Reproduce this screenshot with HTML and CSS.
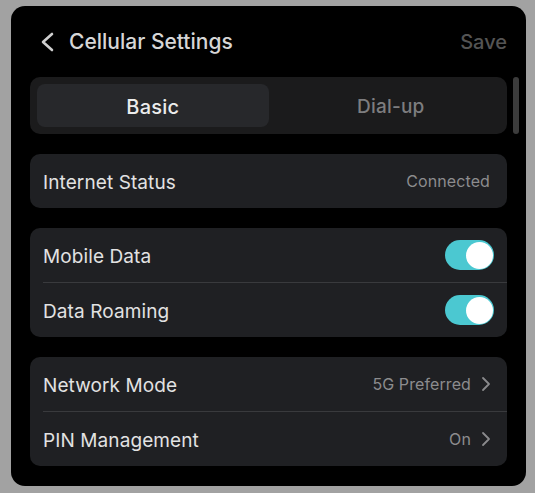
FILE: index.html
```html
<!DOCTYPE html>
<html lang="en">
<head>
  <meta charset="UTF-8">
  <title>Cellular Settings</title>
  <meta name="viewport" content="width=device-width, initial-scale=1.0">
  <link rel="stylesheet" href="styles.css">
</head>
<body>
  <div class="panel">
    <div class="header">
      <div class="header-left">
        <svg class="back" width="14" height="20" viewBox="0 0 14 20"><path d="M12 2 L3 10 L12 18" fill="none" stroke="#cfcfcf" stroke-width="2.6" stroke-linecap="round" stroke-linejoin="round"/></svg>
        <span class="title">Cellular Settings</span>
      </div>
      <span class="save">Save</span>
    </div>
    <div class="scrollbar"></div>
    <div class="tabs">
      <div class="tab active">Basic</div>
      <div class="tab second">Dial-up</div>
    </div>
    <div class="card">
      <div class="row"><span class="label">Internet Status</span><span class="value pad">Connected</span></div>
    </div>
    <div class="card">
      <div class="row"><span class="label">Mobile Data</span><span class="toggle"></span></div>
      <div class="row"><span class="label">Data Roaming</span><span class="toggle"></span></div>
    </div>
    <div class="card">
      <div class="row"><span class="label">Network Mode</span><span class="value">5G Preferred<svg class="chev" width="10" height="16" viewBox="0 0 10 16"><path d="M2 2 L8 8 L2 14" fill="none" stroke="#8a8a8c" stroke-width="1.8" stroke-linecap="round" stroke-linejoin="round"/></svg></span></div>
      <div class="row"><span class="label">PIN Management</span><span class="value">On<svg class="chev" width="10" height="16" viewBox="0 0 10 16"><path d="M2 2 L8 8 L2 14" fill="none" stroke="#8a8a8c" stroke-width="1.8" stroke-linecap="round" stroke-linejoin="round"/></svg></span></div>
    </div>
  </div>
</body>
</html>
```

FILE: styles.css
```css
* {
  box-sizing: border-box;
}
body {
  margin: 0;
  padding: 6px 9px 7px 11px;
  background-color: #a2a2a2;
  font-family: Inter, "Noto Sans", sans-serif;
}
.panel {
  position: relative;
  background-color: #000;
  border-radius: 14px;
  height: 480px;
  padding: 0 19px;
}
.header {
  height: 71px;
  display: flex;
  align-items: center;
  justify-content: space-between;
  padding: 0 0 0 10px;
}
.header-left {
  display: flex;
  align-items: center;
  gap: 15px;
}
.title {
  font-size: 21px;
  font-weight: 500;
  color: #d6d6d6;
}
.save {
  font-size: 20px;
  font-weight: 500;
  color: #545454;
}
.scrollbar {
  position: absolute;
  top: 71px;
  right: 7px;
  width: 6px;
  height: 57px;
  border-radius: 3px;
  background-color: #3c3c3c;
}
.tabs {
  display: grid;
  grid-template-columns: 1fr 1fr;
  height: 57px;
  padding: 7px;
  background-color: #1b1b1c;
  border-radius: 10px;
}
.tab {
  display: flex;
  align-items: center;
  justify-content: center;
  padding-top: 2px;
  border-radius: 8px;
  font-size: 19px;
  font-weight: 500;
  color: #7d7d7f;
  letter-spacing: 0.2px;
}
.tab.second {
  padding-left: 13px;
}
.tab.active {
  background-color: #27282b;
  color: #ececec;
  font-size: 20px;
}
.card {
  margin-top: 20px;
  background-color: #1f2023;
  border-radius: 10px;
}
.row {
  height: 54px;
  display: flex;
  align-items: center;
  justify-content: space-between;
  margin-left: 13px;
  padding-right: 13px;
}
.row + .row {
  border-top: 1px solid #393a3d;
  height: 55px;
}
.label {
  padding-top: 2px;
  font-size: 19px;
  color: #e2e2e2;
  letter-spacing: 0.1px;
}
.value {
  display: flex;
  align-items: center;
  gap: 10px;
  font-size: 16px;
  color: #8c8c8e;
  letter-spacing: 0.1px;
  padding-right: 3px;
}
.value.pad {
  padding-right: 4px;
}
.toggle {
  position: relative;
  width: 49px;
  height: 30px;
  border-radius: 15px;
  background-color: #4bc8d1;
}
.toggle::after {
  content: "";
  position: absolute;
  top: 1.5px;
  right: 1.5px;
  width: 27px;
  height: 27px;
  border-radius: 50%;
  background-color: #fff;
}
```
